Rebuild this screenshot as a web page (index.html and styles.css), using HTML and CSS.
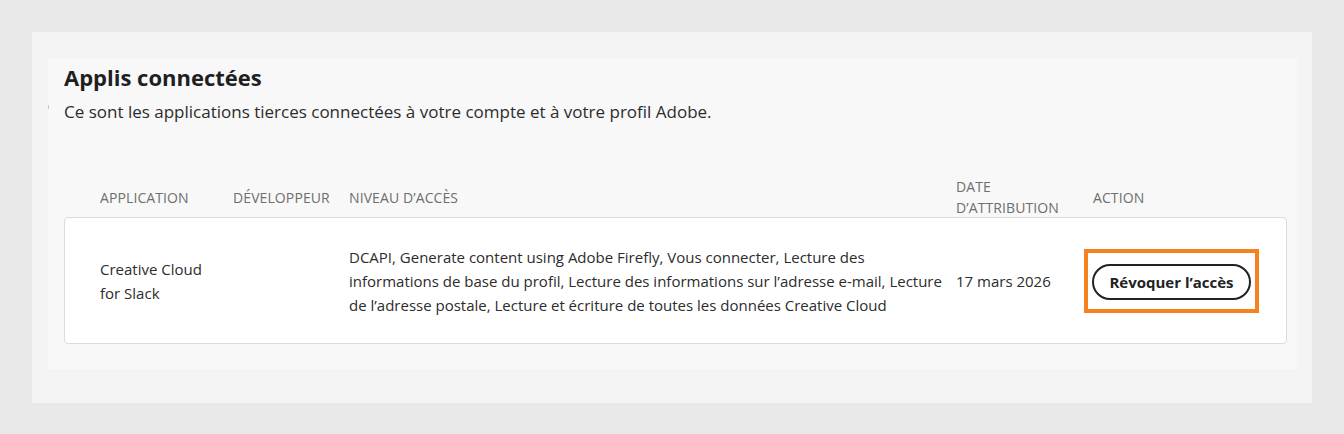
FILE: index.html
```html
<!DOCTYPE html>
<html lang="fr">
<head>
<meta charset="utf-8">
<title>Applis connectées</title>
<link rel="stylesheet" href="styles.css">
</head>
<body>
<div class="outer">
  <section class="inner">
    <span class="tick"></span>
    <h1 class="title">Applis connectées</h1>
    <p class="subtitle">Ce sont les applications tierces connectées à votre compte et à votre profil Adobe.</p>
    <div class="table">
      <div class="thead">
        <div class="th c-app">APPLICATION</div>
        <div class="th c-dev">DÉVELOPPEUR</div>
        <div class="th c-lvl">NIVEAU D’ACCÈS</div>
        <div class="th c-date">DATE<br>D’ATTRIBUTION</div>
        <div class="th c-act">ACTION</div>
      </div>
      <div class="row">
        <div class="td c-app">Creative Cloud<br>for Slack</div>
        <div class="td c-dev"></div>
        <div class="td c-lvl">DCAPI, Generate content using Adobe Firefly, Vous connecter, Lecture des informations de base du profil, Lecture des informations sur l’adresse e-mail, Lecture de l’adresse postale, Lecture et écriture de toutes les données Creative Cloud</div>
        <div class="td c-date">17 mars 2026</div>
        <div class="td c-act">
          <div class="highlight"><button class="btn">Révoquer l’accès</button></div>
        </div>
      </div>
    </div>
  </section>
</div>
</body>
</html>
```

FILE: styles.css
```css
* { box-sizing: border-box; }
html, body { margin: 0; padding: 0; }
body {
  background: #e9e9e9;
  font-family: "Open Sans", "Noto Sans", sans-serif;
  color: #2c2c2c;
  padding: 32px;
  height: 434px;
}
.outer {
  background: #f4f4f4;
  padding: 27px 15px 34px 16px;
  width: 1280px;
}
.inner {
  position: relative;
  background: #f8f8f8;
  padding: 4px 10px 25px 16px;
}
.tick {
  position: absolute;
  left: 0;
  top: 46px;
  width: 1px;
  height: 4px;
  background: #c8c8c8;
}
.title {
  margin: 0;
  font-size: 22px;
  font-weight: 700;
  line-height: 28px;
  color: #1f1f1f;
}
.subtitle {
  margin: 9px 0 0 0;
  font-size: 17px;
  line-height: 24px;
  color: #2c2c2c;
}
.table { margin-top: 52px; }
.thead, .row {
  display: grid;
  grid-template-columns: 133px 116px 607px 137px 1fr;
  align-items: center;
}
.thead {
  padding-left: 36px;
  height: 41px;
}
.th {
  font-size: 14px;
  line-height: 21px;
  color: #6e6e6e;
  letter-spacing: 0.1px;
}
.row {
  background: #fff;
  border: 1px solid #dcdcdc;
  border-radius: 4px;
  padding-left: 35px;
  height: 127px;
}
.td {
  font-size: 15px;
  line-height: 24px;
  color: #2c2c2c;
}
.c-lvl.td { padding-right: 14px; }
.highlight {
  display: inline-block;
  margin-left: -9px;
  border: 4px solid #f5821f;
  padding: 11px 4px 9px 4px;
}
.btn {
  display: block;
  height: 36px;
  width: 159px;
  padding: 0;
  border: 2px solid #222;
  border-radius: 18px;
  background: #fff;
  font-family: "Open Sans", "Noto Sans", sans-serif;
  font-weight: 700;
  font-size: 15px;
  color: #222;
}
```
